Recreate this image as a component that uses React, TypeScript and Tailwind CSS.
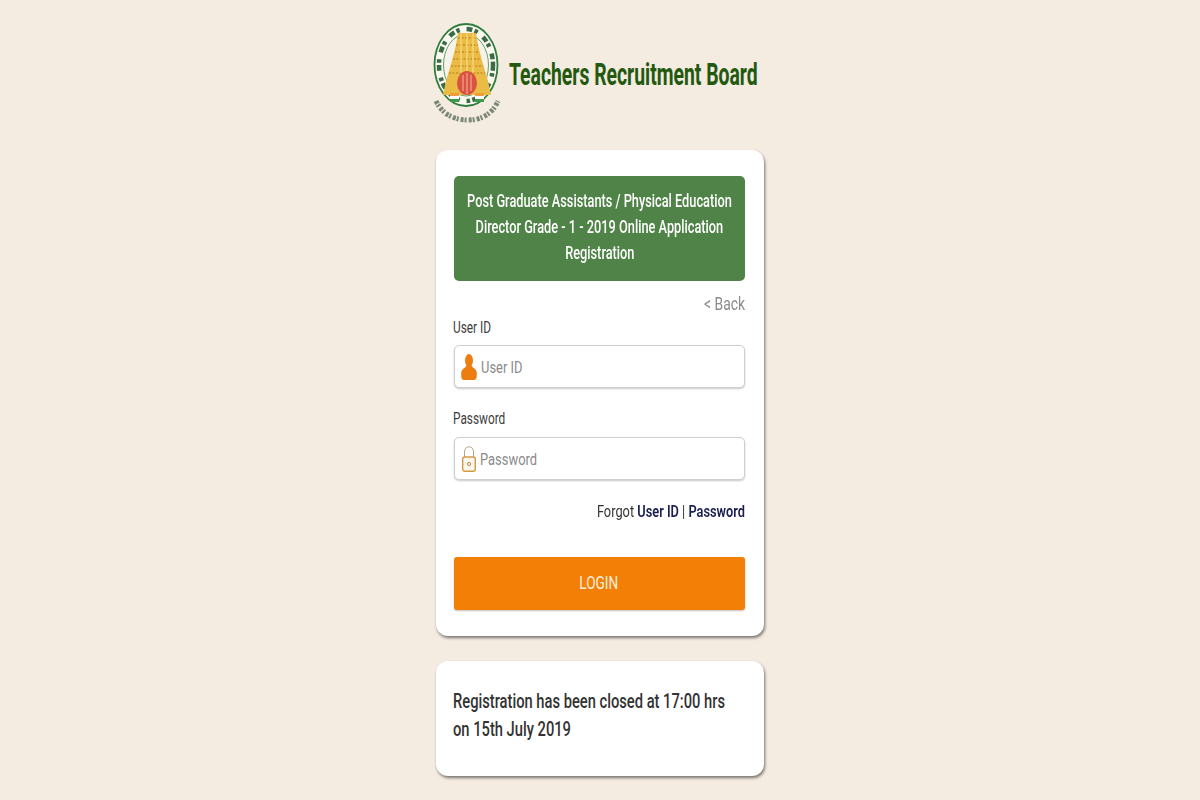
const FONT = "font-['Roboto',sans-serif]"

// The seal on the left of the title; its lettering is too small to read, so dashes stand in for it
function Seal() {
  return (
    <svg width="75" height="112" viewBox="0 0 75 112" className="shrink-0">
      <defs>
        <filter id="soft">
          <feGaussianBlur stdDeviation="0.7" />
        </filter>
      </defs>
      <g filter="url(#soft)">
        <ellipse cx="36" cy="50" rx="31.5" ry="41" fill="#fbf8f0" stroke="#2f7d3c" strokeWidth="1.8" />
        <ellipse cx="36" cy="50" rx="27" ry="36" fill="none" stroke="#3a6b46" strokeWidth="4.5" strokeDasharray="5 2 3 6" pathLength="170" />
        <ellipse cx="36" cy="50" rx="22.5" ry="31" fill="#f8f3ea" stroke="#3d8a48" strokeWidth="0.8" />
        <path d="M28 18 H46 L48 30 L52 46 L58 66 L61 80 H13 L16 66 L22 46 L26 30 Z" fill="#eabb45" />
        <path d="M28 23 H46 M26 30 H48 M25 37 H49 M23 44 H51 M21 51 H53 M19 58 H55" stroke="#c98d22" strokeWidth="1.6" strokeDasharray="2 1.5" />
        <path d="M31 19 V58 M37 19 V58 M43 19 V58" stroke="#f5da7d" strokeWidth="1.3" />
        <ellipse cx="37" cy="68" rx="10" ry="12" fill="#d9533f" />
        <path d="M33 60 V76 M37 58 V79 M41 60 V76" stroke="#f0a08c" strokeWidth="1.3" />
        <rect x="20" y="78" width="9" height="3" fill="#ef9a3a" />
        <rect x="20" y="81" width="9" height="3" fill="#fff" />
        <rect x="20" y="84" width="9" height="3" fill="#3d9a4b" />
        <rect x="45" y="78" width="9" height="3" fill="#ef9a3a" />
        <rect x="45" y="81" width="9" height="3" fill="#fff" />
        <rect x="45" y="84" width="9" height="3" fill="#3d9a4b" />
        <path d="M6 86 C 12 99, 24 105, 38 105 C 50 105, 62 100, 68 86" fill="none" stroke="#7c8876" strokeWidth="5" strokeDasharray="3 1 2 2" />
      </g>
    </svg>
  )
}

function UserIcon() {
  return (
    <svg width="16" height="26" viewBox="0 0 16 26" className="shrink-0">
      <ellipse cx="8" cy="6.5" rx="4" ry="6.5" fill="#ee7d11" />
      <path d="M5.5 11 C 5.5 14 0.5 14 0.2 19 C 0 23 0.5 26 3 26 H13 C 15.5 26 16 23 15.8 19 C 15.5 14 10.5 14 10.5 11 Z" fill="#ee7d11" />
    </svg>
  )
}

function LockIcon() {
  return (
    <svg width="14" height="26" viewBox="0 0 14 26" className="ml-[1px] shrink-0" fill="none">
      <path d="M2.5 11 V6 C2.5 2.5 4.5 0.8 7 0.8 C9.5 0.8 11.5 2.5 11.5 6 V11" stroke="#b9a58a" strokeWidth="1" />
      <rect x="0.7" y="11" width="12.6" height="14.3" rx="2" stroke="#d39a45" strokeWidth="1.4" fill="#fdf8ef" />
      <circle cx="7" cy="18" r="1.6" stroke="#b98a45" strokeWidth="1" />
    </svg>
  )
}

function Field({ label, top, gap, icon }: { label: string; top: string; gap: string; icon: React.ReactNode }) {
  return (
    <div className={top}>
      <div className="h-[20px] origin-left -translate-x-[1px] translate-y-[1px] scale-x-[0.74] text-[16px] leading-[20px] whitespace-nowrap text-[#3d3d3d]">{label}</div>
      <div className={`${gap} flex h-[43px] items-center gap-[4px] overflow-hidden rounded-[5px] border border-[#cfcfcf] bg-white pl-[6px] shadow-[0_1px_2px_rgba(0,0,0,0.22)]`}>
        {icon}
        <input
          placeholder={label}
          className="w-[250px] origin-left translate-y-[1px] scale-x-[0.76] bg-transparent text-[17px] outline-none placeholder:text-[#8a8a8a]"
        />
      </div>
    </div>
  )
}

export default function App() {
  return (
    <div className={`${FONT} flex h-[800px] flex-col items-center overflow-hidden bg-[#f4ebe1]`}>
      <div className="mt-[15px] flex h-[112px] w-[328px] items-center">
        <div className="-ml-[6px] flex items-center">
          <Seal />
          <span className="block w-[250px] origin-left translate-x-[4px] translate-y-[3px] scale-x-[0.605] text-[32px] font-bold whitespace-nowrap text-[#23590f]">
            Teachers Recruitment Board
          </span>
        </div>
      </div>

      <div className="mt-[23px] w-[328px] rounded-[12px] bg-white pt-[26px] pr-[19px] pb-[26px] pl-[18px] shadow-[1px_2px_3px_rgba(0,0,0,0.5)]">
        <div className="flex h-[105px] flex-col items-center justify-center rounded-[5px] bg-[#508347] pb-[4px] text-[18px] leading-[26px] font-medium text-white">
          <span className="scale-x-[0.71] whitespace-nowrap">Post Graduate Assistants / Physical Education</span>
          <span className="scale-x-[0.71] whitespace-nowrap">Director Grade - 1 - 2019 Online Application</span>
          <span className="scale-x-[0.71] whitespace-nowrap">Registration</span>
        </div>
        <div className="mt-[12px] h-[22px] origin-right scale-x-[0.77] text-right text-[18px] leading-[22px] text-[#8b8b8b]">&lt; Back</div>
        <Field label="User ID" top="mt-[2px]" gap="mt-[8px]" icon={<UserIcon />} />
        <Field label="Password" top="mt-[20px]" gap="mt-[9px]" icon={<LockIcon />} />
        <div className="mt-[21px] h-[20px] origin-right scale-x-[0.753] text-right text-[17px] leading-[20px] whitespace-nowrap text-[#333]">
          Forgot <a className="font-semibold text-[#1a1f4f]">User ID</a> | <a className="font-semibold text-[#1a1f4f]">Password</a>
        </div>
        <button className="mt-[36px] flex h-[53px] w-full items-center justify-center rounded-[3px] bg-[#f47f07] text-[18px] text-[#fdf0dc] shadow-[0_1px_2px_rgba(0,0,0,0.25)]">
          <span className="-translate-x-[1px] -translate-y-[1px] scale-x-[0.755]">LOGIN</span>
        </button>
      </div>

      <div className="mt-[25px] h-[115px] w-[328px] rounded-[12px] bg-white px-[18px] pt-[26px] text-[20px] leading-[28px] font-medium text-[#333] shadow-[1px_2px_3px_rgba(0,0,0,0.5)]">
        <div className="origin-left -translate-x-[1px] scale-x-[0.735] whitespace-nowrap">Registration has been closed at 17:00 hrs</div>
        <div className="origin-left -translate-x-[1px] scale-x-[0.735] whitespace-nowrap">on 15th July 2019</div>
      </div>
    </div>
  )
}
